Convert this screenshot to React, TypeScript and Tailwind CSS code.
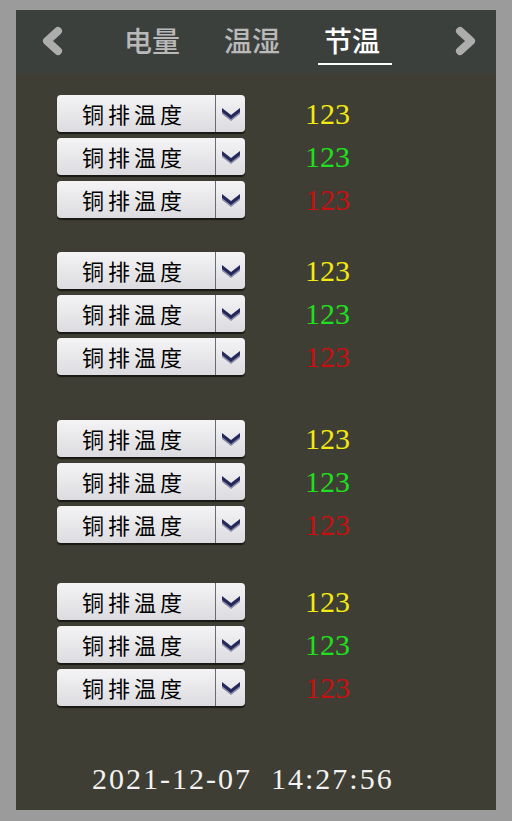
const groups = [
  { mt: "mt-[19px]" },
  { mt: "mt-[34px]" },
  { mt: "mt-[45px]" },
  { mt: "mt-[40px]" },
];

const values = [
  { v: "123", color: "text-[#f2ea10]" },
  { v: "123", color: "text-[#1ee01e]" },
  { v: "123", color: "text-[#c81010]" },
];

function Select() {
  return (
    <div className="flex h-[37px] w-[188px] rounded-[4px] bg-gradient-to-b from-[#f4f4f6] to-[#dcdce0] shadow-[0_2px_1px_rgba(0,0,0,0.6)]">
      <div
        className="flex flex-1 items-center justify-center pr-[4px] text-[22px] tracking-[4px] text-black"
        style={{ fontFamily: '"Noto Sans CJK SC", sans-serif' }}
      >
        铜排温度
      </div>
      <div className="flex w-[30px] items-center justify-center border-l border-[#6a6a70]">
        <svg width="20" height="14" viewBox="0 0 20 14">
          <polygon points="1,3 10,10 19,3 19,7 10,14 1,7" fill="#8a8ca8" />
          <polygon points="1,1 10,8 19,1 19,5 10,12 1,5" fill="#25285a" />
        </svg>
      </div>
    </div>
  );
}

function Arrow({ dir }: { dir: "l" | "r" }) {
  return (
    <svg width="24" height="32" viewBox="0 0 24 32">
      <polyline
        points={dir === "l" ? "17,6 6,16 17,26" : "7,6 18,16 7,26"}
        fill="none"
        stroke="#adadad"
        strokeWidth="8"
        strokeLinecap="round"
        strokeLinejoin="round"
      />
    </svg>
  );
}

export default function App() {
  return (
    <div className="flex h-[821px] w-[512px] flex-col bg-[#9b9b9b] px-[16px] pb-[11px] pt-[10px]">
      <div className="flex flex-1 flex-col bg-[#3e3e34]">
        {/* header tabs */}
        <div
          className="relative flex h-[60px] items-center bg-[#3c403d] text-[28px]"
          style={{ fontFamily: '"Noto Sans CJK SC", sans-serif' }}
        >
          <div className="absolute left-[25px] top-[15px]">
            <Arrow dir="l" />
          </div>
          <span className="absolute left-[108px] top-[9px] font-medium text-[#b9b9b9]">电量</span>
          <span className="absolute left-[208px] top-[9px] font-medium text-[#b9b9b9]">温湿</span>
          <span className="absolute left-[308px] top-[9px] font-medium text-white">节温</span>
          <div className="absolute left-[302px] top-[53px] h-[2px] w-[74px] bg-white" />
          <div className="absolute left-[437px] top-[15px]">
            <Arrow dir="r" />
          </div>
        </div>
        <div className="h-[6px] bg-gradient-to-b from-[#3c403d] to-[#3e3e34]" />

        {/* groups */}
        <div className="flex flex-col pl-[41px]">
          {groups.map((g, gi) => (
            <div key={gi} className={`flex flex-col gap-[6px] ${g.mt}`}>
              {values.map((val, i) => (
                <div key={i} className="flex items-center">
                  <Select />
                  <span
                    className={`ml-[60px] text-[30px] leading-none ${val.color}`}
                    style={{ fontFamily: '"Liberation Serif", serif' }}
                  >
                    {val.v}
                  </span>
                </div>
              ))}
            </div>
          ))}
        </div>

        {/* clock */}
        <div className="mt-auto flex pb-[9px] pl-[76px]">
          <span
            className="whitespace-pre text-[30px] tracking-[2px] text-[#f2f2f2]"
            style={{ fontFamily: '"Liberation Serif", serif' }}
          >
            2021-12-07  14:27:56
          </span>
        </div>
      </div>
    </div>
  );
}
